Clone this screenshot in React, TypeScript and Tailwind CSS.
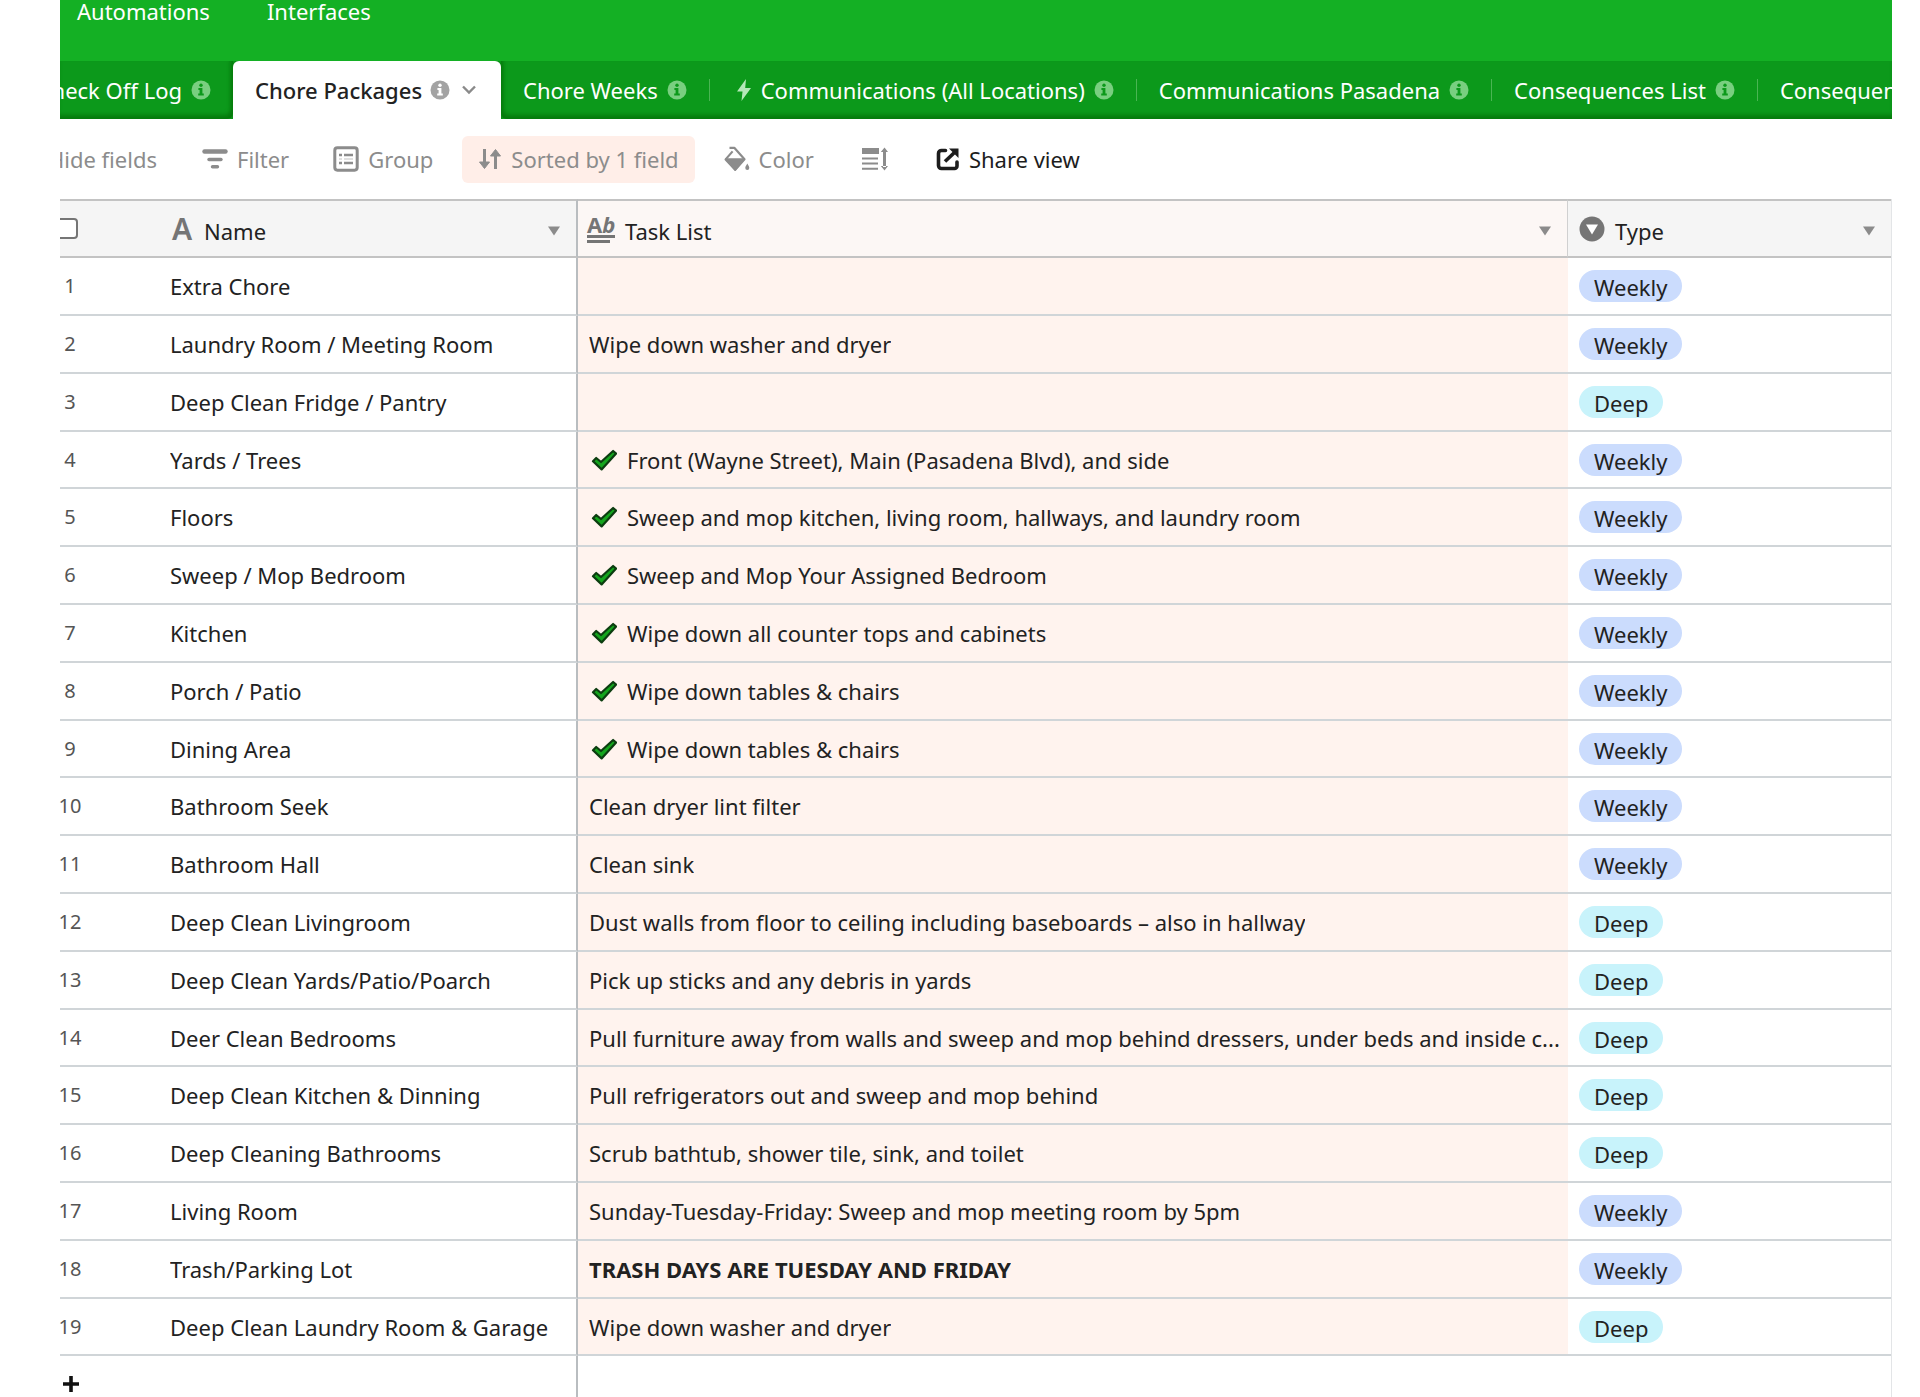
import React from "react";
import clsx from "clsx";

type ChoreType = "Weekly" | "Deep";

interface Chore {
  name: string;
  task?: string;
  type: ChoreType;
  checked?: boolean;
  strong?: boolean;
}

const CHORES: Chore[] = [
  { name: "Extra Chore", type: "Weekly" },
  { name: "Laundry Room / Meeting Room", task: "Wipe down washer and dryer", type: "Weekly" },
  { name: "Deep Clean Fridge / Pantry", type: "Deep" },
  { name: "Yards / Trees", task: "Front (Wayne Street), Main (Pasadena Blvd), and side", type: "Weekly", checked: true },
  { name: "Floors", task: "Sweep and mop kitchen, living room, hallways, and laundry room", type: "Weekly", checked: true },
  { name: "Sweep / Mop Bedroom", task: "Sweep and Mop Your Assigned Bedroom", type: "Weekly", checked: true },
  { name: "Kitchen", task: "Wipe down all counter tops and cabinets", type: "Weekly", checked: true },
  { name: "Porch / Patio", task: "Wipe down tables & chairs", type: "Weekly", checked: true },
  { name: "Dining Area", task: "Wipe down tables & chairs", type: "Weekly", checked: true },
  { name: "Bathroom Seek", task: "Clean dryer lint filter", type: "Weekly" },
  { name: "Bathroom Hall", task: "Clean sink", type: "Weekly" },
  { name: "Deep Clean Livingroom", task: "Dust walls from floor to ceiling including baseboards – also in hallway", type: "Deep" },
  { name: "Deep Clean Yards/Patio/Poarch", task: "Pick up sticks and any debris in yards", type: "Deep" },
  { name: "Deer Clean Bedrooms", task: "Pull furniture away from walls and sweep and mop behind dressers, under beds and inside c...", type: "Deep" },
  { name: "Deep Clean Kitchen & Dinning", task: "Pull refrigerators out and sweep and mop behind", type: "Deep" },
  { name: "Deep Cleaning Bathrooms", task: "Scrub bathtub, shower tile, sink, and toilet", type: "Deep" },
  { name: "Living Room", task: "Sunday-Tuesday-Friday: Sweep and mop meeting room by 5pm", type: "Weekly" },
  { name: "Trash/Parking Lot", task: "TRASH DAYS ARE TUESDAY AND FRIDAY", type: "Weekly", strong: true },
  { name: "Deep Clean Laundry Room & Garage", task: "Wipe down washer and dryer", type: "Deep" },
];

const InfoIcon = ({ className }: { className?: string }) => (
  <svg viewBox="0 0 20 20" className={clsx("h-5 w-5 shrink-0", className)} aria-hidden="true">
    <circle cx="10" cy="10" r="9.5" fill="currentColor" />
    <g className="fill-(--info-glyph)">
      <circle cx="10" cy="5.2" r="1.7" />
      <path d="M7.4 8h4v5.600h1.400v2H7.200v-2h1.400V10H7.400z" />
    </g>
  </svg>
);

const BoltIcon = () => (
  <svg viewBox="0 0 16 22" className="h-[22px] w-4 shrink-0 text-[#b5e8b9]" aria-hidden="true">
    <path d="M10 0 1 12.5h5.5L5.5 22 15 9H9.2z" fill="currentColor" />
  </svg>
);

const FilterIcon = () => (
  <svg viewBox="0 0 26 22" className="h-[22px] w-[26px]" fill="none" stroke="currentColor" strokeLinecap="round" aria-hidden="true">
    <path d="M2.5 3.5h21" strokeWidth="4.4" />
    <path d="M7 11.5h12" strokeWidth="3.4" />
    <path d="M10.5 18.8h5" strokeWidth="3.4" />
  </svg>
);

const GroupIcon = () => (
  <svg viewBox="0 0 26 26" className="h-[26px] w-[26px]" fill="none" stroke="currentColor" aria-hidden="true">
    <rect x="1.8" y="1.8" width="22.4" height="22.4" rx="2.6" strokeWidth="3" />
    <path d="M6 9h3M6 17h3M11 9h9M11 17h9" strokeWidth="2.6" />
    <path d="M6 13h3M11 13h9" strokeWidth="1.4" opacity=".35" />
  </svg>
);

const SortIcon = () => (
  <svg viewBox="0 0 24 22" className="h-[22px] w-6" fill="none" stroke="currentColor" strokeWidth="3" aria-hidden="true">
    <path d="M6.5 1v15" />
    <path d="M1.5 14h10L6.5 20.5z" fill="currentColor" strokeWidth="1" strokeLinejoin="round" />
    <path d="M17.5 21V6" />
    <path d="M12.5 8h10l-5-6.5z" fill="currentColor" strokeWidth="1" strokeLinejoin="round" />
  </svg>
);

const ColorIcon = () => (
  <svg viewBox="0 0 26 26" className="h-[26px] w-[26px]" aria-hidden="true">
    <path d="M5.5 1.8h4.8l10.2 11.4-9.3 10.6L1.6 13.4l7-8" fill="none" stroke="currentColor" strokeWidth="2.2" strokeLinejoin="round" />
    <path d="M2 13h18l-8.8 11z" fill="currentColor" stroke="currentColor" strokeWidth="1.5" strokeLinejoin="round" />
    <path d="M23.3 17.5c1.2 2 2 3.3 2 4.6a2 2 0 0 1-4 0c0-1.3.8-2.600 2-4.600z" fill="currentColor" />
  </svg>
);

const RowHeightIcon = () => (
  <svg viewBox="0 0 26 24" className="h-6 w-[26px]" fill="currentColor" aria-hidden="true">
    <path d="M0 1h17v6H0zM0 10.500h16v2H0zM0 15.500h16v2H0zM0 20.800h16v2H0z" />
    <path d="M21 4h3v16h-3zM18.800 5l3.700-4.500L26 5zM18.800 19l3.700 4.500L26 19z" />
  </svg>
);

const ShareIcon = () => (
  <svg viewBox="0 0 24 24" className="h-6 w-6" fill="none" stroke="currentColor" strokeWidth="3.600" aria-hidden="true">
    <path d="M9.500 3.500H5.500a3 3 0 0 0-3 3v12a3 3 0 0 0 3 3h13a2.500 2.500 0 0 0 2.500-2.500v-4" strokeLinecap="round" />
    <path d="M9 14.500 19 5" />
    <path d="M13 1.500h9.500v9.500z" fill="currentColor" stroke="none" />
  </svg>
);

const CheckMark = () => (
  <svg viewBox="0 0 28 24" className="h-6 w-7 shrink-0" aria-hidden="true">
    <path d="M4 13.200 7.200 10l4.800 4 12.100-11 3 2.600L12.600 21.400z" fill="#14a51d" stroke="#0c3d10" strokeWidth="2.200" strokeLinejoin="round" />
  </svg>
);

const Caret = () => (
  <svg viewBox="0 0 12 10" className="h-[10px] w-3 text-[#8b8b8b]" aria-hidden="true">
    <path d="M0 .5h12L6 9.500z" fill="currentColor" />
  </svg>
);

const SelectIcon = () => (
  <svg viewBox="0 0 26 26" className="h-[26px] w-[26px] shrink-0" aria-hidden="true">
    <circle cx="13" cy="13" r="12.500" fill="#757575" />
    <path d="M7 8.500h12L13 18.500z" fill="#fff" />
  </svg>
);

const LongTextIcon = () => (
  <span className="flex w-7 shrink-0 flex-col gap-[2px] text-[#757575]" aria-hidden="true">
    <span className="h-[18px] text-[22px] leading-[18px] font-bold">
      A<i>b</i>
    </span>
    <span className="h-[3px] w-7 bg-current" />
    <span className="h-[3px] w-[23px] bg-current" />
  </span>
);

function Tab({ label, bolt }: { label: string; bolt?: boolean }) {
  return (
    <button type="button" className="flex h-full shrink-0 items-center pr-[22px] pl-[22px]">
      {bolt && (
        <span className="mr-[9px] ml-1">
          <BoltIcon />
        </span>
      )}
      <span className="whitespace-nowrap">{label}</span>
      <InfoIcon className="ml-[9px] text-[#79cf80]" />
    </button>
  );
}

function Divider() {
  return <span className="h-[22px] w-px shrink-0 bg-[#4ab553]" />;
}

function ToolButton({ label, icon, className }: { label?: string; icon: React.ReactNode; className?: string }) {
  return (
    <button type="button" aria-label={label ?? "Row height"} className={clsx("flex h-[47px] shrink-0 items-center gap-[9px] whitespace-nowrap", className)}>
      {icon}
      {label && <span>{label}</span>}
    </button>
  );
}

function HeaderCell({ label, icon, className }: { label: string; icon: React.ReactNode; className?: string }) {
  return (
    <th scope="col" className={clsx("h-[59px] border-y-2 border-[#c3c3c3] p-0 text-left font-normal", className)}>
      <div className="flex items-center gap-[10px]">
        {icon}
        <span className="pt-1">{label}</span>
        <button type="button" aria-label={`${label} options`} className="mr-4 ml-auto pt-1">
          <Caret />
        </button>
      </div>
    </th>
  );
}

export default function App() {
  return (
    <div className="h-screen overflow-hidden bg-white pr-7 pl-[60px] font-['Noto_Sans','Open_Sans',sans-serif] text-[22px] leading-8 text-[#222]">
      <header className="bg-[#14b024] text-white">
        <nav className="flex h-[61px] items-start gap-[57px] pl-[17px] leading-[22px]">
          <a href="#automations">Automations</a>
          <a href="#interfaces">Interfaces</a>
        </nav>

        <div className="flex h-[58px] overflow-hidden bg-[#0c991b] [--info-glyph:#0c991b]">
          <div className="flex w-[173px] shrink-0 justify-end overflow-hidden rounded-br-md shadow-[inset_-2px_-4px_4px_#067a0c]">
            <Tab label="Check Off Log" />
          </div>
          <div className="flex w-[268px] shrink-0 items-center rounded-t-md bg-white pl-[22px] text-[#222] shadow-[0_0_4px_#067a0c] [--info-glyph:#fff]">
            <button type="button" className="flex items-center font-medium whitespace-nowrap">
              Chore Packages
              <InfoIcon className="ml-2 text-[#a3a3a3]" />
              <svg viewBox="0 0 14 10" className="ml-3 h-[10px] w-[14px]" fill="none" stroke="#8a8a8a" strokeWidth="2.400" aria-hidden="true">
                <path d="m1 1.500 6 6 6-6" />
              </svg>
            </button>
          </div>
          <div className="flex min-w-0 flex-1 items-center overflow-hidden rounded-bl-md shadow-[inset_2px_-4px_4px_#067a0c]">
            <Tab label="Chore Weeks" />
            <Divider />
            <Tab label="Communications (All Locations)" bolt />
            <Divider />
            <Tab label="Communications Pasadena" />
            <Divider />
            <Tab label="Consequences List" />
            <Divider />
            <Tab label="Consequences" />
          </div>
        </div>
      </header>

      <div className="flex h-20 items-center text-[#8c8c8c]">
        <div className="flex w-[97px] shrink-0 justify-end overflow-hidden">
          <button type="button" className="shrink-0 whitespace-nowrap">Hide fields</button>
        </div>
        <ToolButton label="Filter" icon={<FilterIcon />} className="ml-[45px]" />
        <ToolButton label="Group" icon={<GroupIcon />} className="ml-11" />
        <ToolButton label="Sorted by 1 field" icon={<SortIcon />} className="ml-[29px] rounded-md bg-[#ffeee8] px-4" />
        <ToolButton label="Color" icon={<ColorIcon />} className="ml-[29px]" />
        <ToolButton icon={<RowHeightIcon />} className="ml-12" />
        <ToolButton label="Share view" icon={<ShareIcon />} className="ml-12 text-[#1d1d1d]" />
      </div>

      <table className="w-full table-fixed border-separate border-spacing-0 border-r border-[#e3e5e7]">
        <colgroup>
          <col className="w-[110px]" />
          <col className="w-[408px]" />
          <col />
          <col className="w-[323px]" />
        </colgroup>
        <thead>
          <tr>
            <th className="h-[59px] overflow-hidden border-y-2 border-[#c3c3c3] bg-[#f5f5f5] p-0 text-left">
              <input type="checkbox" aria-label="Select all" className="-ml-1 block h-[21px] w-[22px] appearance-none rounded-sm border-2 border-[#757575] bg-white" />
            </th>
            <HeaderCell
              label="Name"
              className="border-r-2 border-r-[#b9bdc0] bg-[#f5f5f5]"
              icon={<span className="w-6 text-center text-[30px] leading-7 font-semibold text-[#757575]" aria-hidden="true">A</span>}
            />
            <HeaderCell label="Task List" className="border-r border-r-[#d0d0d0] bg-[#fcf7f5] pl-[9px]" icon={<LongTextIcon />} />
            <HeaderCell label="Type" className="bg-[#f5f5f5] pl-[11px]" icon={<SelectIcon />} />
          </tr>
        </thead>
        <tbody>
          {CHORES.map((chore, index) => (
            <tr key={chore.name} className="h-[58px] *:border-b-2 *:border-[#d0d5d8] nth-[5n-1]:h-[57px]">
              <td className="p-0">
                <span className="block w-5 text-center text-xl leading-8 text-[#555]">
                  <span className="-mx-1">{index + 1}</span>
                </span>
              </td>
              <td className="truncate border-r-2 border-r-[#b9bdc0]! p-0">{chore.name}</td>
              <td className="bg-[#fff3ee] p-0 pr-2 pl-[11px]">
                <div className="flex items-center gap-[10px]">
                  {chore.checked && <CheckMark />}
                  <span className={clsx("truncate", chore.strong && "font-bold")}>{chore.task}</span>
                </div>
              </td>
              <td className="p-0 pl-[11px]">
                <span
                  className={clsx(
                    "block h-8 w-fit rounded-full px-[15px] leading-[34px]",
                    chore.type === "Weekly" ? "bg-[#cbdcfd]" : "bg-[#c8f3fb]",
                  )}
                >
                  {chore.type}
                </span>
              </td>
            </tr>
          ))}
          <tr className="h-[56px]">
            <td className="p-0">
              <button type="button" aria-label="Add record" className="ml-[3px] block">
                <svg viewBox="0 0 16 16" className="h-4 w-4" stroke="#111" strokeWidth="3.600" aria-hidden="true">
                  <path d="M8 0v16M0 8h16" />
                </svg>
              </button>
            </td>
            <td className="border-r-2 border-[#b9bdc0]" />
            <td />
            <td />
          </tr>
        </tbody>
      </table>
    </div>
  );
}
